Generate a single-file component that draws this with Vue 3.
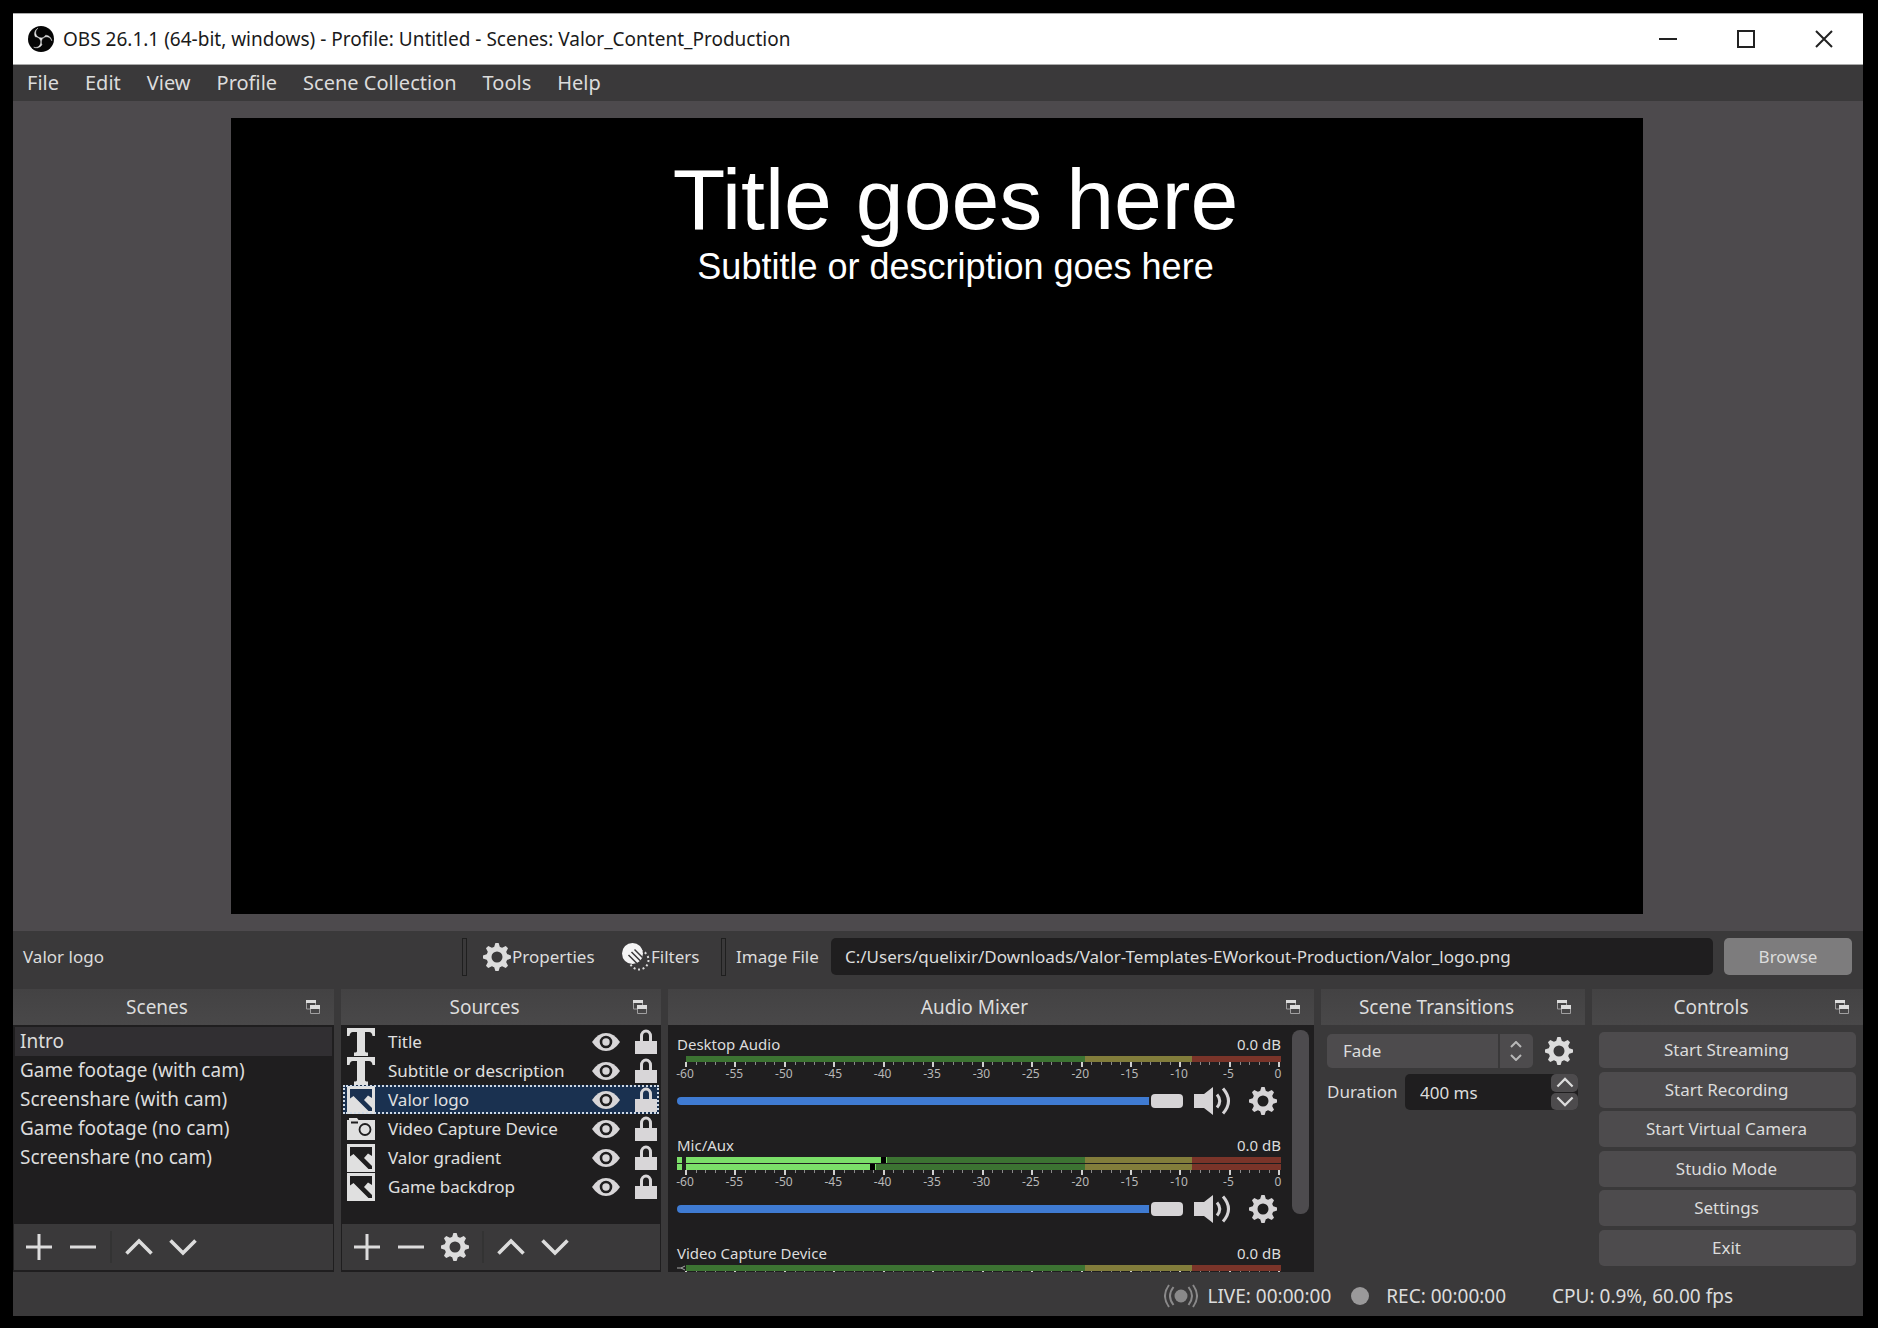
<script setup>
import { ref } from 'vue'

const menus = ['File', 'Edit', 'View', 'Profile', 'Scene Collection', 'Tools', 'Help']
const scenes = [
  'Intro',
  'Game footage (with cam)',
  'Screenshare (with cam)',
  'Game footage (no cam)',
  'Screenshare (no cam)',
]
const activeScene = ref('Intro')
const sources = [
  { name: 'Title', icon: 'text' },
  { name: 'Subtitle or description', icon: 'text' },
  { name: 'Valor logo', icon: 'image' },
  { name: 'Video Capture Device', icon: 'camera' },
  { name: 'Valor gradient', icon: 'image' },
  { name: 'Game backdrop', icon: 'image' },
]
const activeSource = ref('Valor logo')
const channels = [
  { name: 'Desktop Audio', db: '0.0 dB', bars: [0] },
  { name: 'Mic/Aux', db: '0.0 dB', bars: [32.7, 31] },
  { name: 'Video Capture Device', db: '0.0 dB', bars: [0], idle: true },
]
const labels = [-60, -55, -50, -45, -40, -35, -30, -25, -20, -15, -10, -5, 0]
const controls = ['Start Streaming', 'Start Recording', 'Start Virtual Camera', 'Studio Mode', 'Settings', 'Exit']
const filePath = ref('C:/Users/quelixir/Downloads/Valor-Templates-EWorkout-Production/Valor_logo.png')
const duration = ref('400 ms')
</script>

<template>
  <div class="desktop">
    <svg class="sprite" aria-hidden="true">
      <symbol id="gear" viewBox="0 0 28 28">
        <circle cx="14" cy="14" r="8" fill="none" stroke="currentColor" stroke-width="5" />
        <path
          v-for="n in 8"
          :key="n"
          d="M10.800 5L12.400 0h3.200L17.200 5z"
          fill="currentColor"
          :transform="`rotate(${n * 45} 14 14)`"
        />
      </symbol>
      <symbol id="plus" viewBox="0 0 28 28">
        <path d="M14 1v26M1 14h26" fill="none" stroke="currentColor" stroke-width="3" />
      </symbol>
      <symbol id="minus" viewBox="0 0 28 28">
        <path d="M1 14h26" fill="none" stroke="currentColor" stroke-width="3" />
      </symbol>
      <symbol id="up" viewBox="0 0 28 28">
        <path d="M1.500 20.500L14 8l12.500 12.500" fill="none" stroke="currentColor" stroke-width="3.600" />
      </symbol>
      <symbol id="down" viewBox="0 0 28 28">
        <path d="M1.500 7.500L14 20 26.500 7.500" fill="none" stroke="currentColor" stroke-width="3.600" />
      </symbol>
      <symbol id="text" viewBox="0 0 28 28">
        <path d="M0 0h28v8h-2.500q-.5-4-3.500-4h-4v19q0 1.500 3 1.500V28H7v-3.500q3 0 3-1.500V4H6Q3 4 2.500 8H0z" fill="currentColor" />
      </symbol>
      <symbol id="image" viewBox="0 0 28 28">
        <path
          d="M0 0h28v28H0zM3 3v9.500L6.500 10l15 15H25v-3l-8-8 4-4.500 4 2.500V3z"
          fill="currentColor"
          fill-rule="evenodd"
        />
      </symbol>
      <symbol id="camera" viewBox="0 0 28 28">
        <path d="M2 3h8l1.500 2H28v20H0V5h2z" fill="currentColor" />
        <path d="M4 7.500h7" stroke="#1f1e1f" stroke-width="2" />
        <circle cx="18" cy="14.500" r="5.500" fill="none" stroke="#1f1e1f" stroke-width="1.800" />
      </symbol>
      <symbol id="eye" viewBox="0 0 28 20">
        <path d="M0 10Q6 1 14 1t14 9q-6 9-14 9T0 10z" fill="currentColor" />
        <circle cx="14" cy="10" r="5" fill="none" stroke="#1f1e1f" stroke-width="2.600" />
      </symbol>
      <symbol id="lock" viewBox="0 0 22 26">
        <path d="M6.500 13V7a4.500 5 0 0 1 9 0V13" fill="none" stroke="currentColor" stroke-width="3" />
        <path d="M0 12h22v13H0z" fill="currentColor" />
      </symbol>
      <symbol id="speaker" viewBox="0 0 38 28">
        <path d="M0 7h10l9-7v28l-9-7H0z" fill="currentColor" />
        <path d="M23 7.500q5.500 6.500 0 13M29 1.500q11 12.500 0 25" fill="none" stroke="currentColor" stroke-width="3" />
      </symbol>
      <symbol id="float" viewBox="0 0 14 14">
        <path d="M0 0h10v3H0zM4 5h10v4H4z" fill="#dcdcdc" />
        <path d="M.5 3v6H4M9.500 3v2M4.500 9v4.500h9V9" fill="none" stroke="#a09fa0" />
      </symbol>
      <symbol id="filters" viewBox="0 0 28 28">
        <circle cx="17" cy="17" r="9.500" fill="none" stroke="currentColor" stroke-width="2" stroke-dasharray="2 2.600" />
        <circle cx="10.500" cy="10.500" r="10.500" fill="#f4f4f4" />
        <path d="M6.500 12l8.500 8.500M9.500 9l9 9M12.500 6.500l8 8" stroke="#3a393a" stroke-width="1.500" />
      </symbol>
      <symbol id="live" viewBox="0 0 34 24">
        <circle cx="17" cy="12" r="6.500" fill="currentColor" />
        <path
          d="M9.500 3q-7 9 0 18M5 1q-8 11 0 22M24.500 3q7 9 0 18M29 1q8 11 0 22"
          fill="none"
          stroke="currentColor"
          stroke-width="2"
        />
      </symbol>
    </svg>

    <main class="window">
      <header class="titlebar">
        <svg class="app-logo" viewBox="0 0 24 24">
          <circle cx="12" cy="12" r="12" fill="#050505" />
          <path
            fill="#e8e8e8"
            stroke="#e8e8e8"
            stroke-width=".4"
            d="M6.182 5.990c.352-1.698 1.503-3.229 3.050-3.996-.269.273-.595.483-.844.780-1.020 1.100-1.480 2.692-1.199 4.156.355 2.235 2.455 4.060 4.732 4.028 1.765.079 3.485-.937 4.348-2.468 1.848.063 3.645 1.017 4.700 2.548.540.799.962 1.736.991 2.711-.342-1.295-1.202-2.446-2.375-3.095-1.135-.639-2.529-.802-3.772-.425-1.560.448-2.849 1.723-3.293 3.293-.377 1.250-.216 2.628.377 3.772-.825 1.429-2.315 2.449-3.932 2.756-1.244.261-2.551.059-3.709-.464 1.036.302 2.161.355 3.191-.011 1.381-.457 2.522-1.567 3.024-2.935.556-1.490.345-3.261-.591-4.540-.700-1.007-1.803-1.717-3.002-1.969-.380-.068-.764-.098-1.148-.134-.611-1.231-.834-2.660-.528-3.996z"
          />
        </svg>
        <h1>OBS 26.1.1 (64-bit, windows) - Profile: Untitled - Scenes: Valor_Content_Production</h1>
        <button aria-label="Minimize">
          <svg viewBox="0 0 18 18"><path d="M0 9h18" /></svg>
        </button>
        <button aria-label="Maximize">
          <svg viewBox="0 0 18 18"><path d="M1 1h16v16H1z" /></svg>
        </button>
        <button aria-label="Close">
          <svg viewBox="0 0 18 18"><path d="M1 1l16 16M17 1L1 17" /></svg>
        </button>
      </header>

      <nav class="menubar">
        <button v-for="m in menus" :key="m">{{ m }}</button>
      </nav>

      <section class="preview">
        <div class="canvas">
          <p class="canvas-title">Title goes here</p>
          <p class="canvas-subtitle">Subtitle or description goes here</p>
        </div>
      </section>

      <section class="context">
        <span class="context-name">{{ activeSource }}</span>
        <i class="grip"></i>
        <button class="tool properties"><svg><use href="#gear" /></svg>Properties</button>
        <button class="tool filters"><svg><use href="#filters" /></svg>Filters</button>
        <i class="grip"></i>
        <label for="file">Image File</label>
        <input id="file" v-model="filePath" type="text" />
        <button class="browse">Browse</button>
      </section>

      <div class="docks">
        <section class="dock">
          <header><h2>Scenes</h2><button aria-label="Float"><svg><use href="#float" /></svg></button></header>
          <div class="panel">
            <ul>
              <li
                v-for="s in scenes"
                :key="s"
                class="scene"
                :class="{ active: s === activeScene }"
                @click="activeScene = s"
              >{{ s }}</li>
            </ul>
            <div class="toolbar">
              <button aria-label="Add scene"><svg><use href="#plus" /></svg></button>
              <button aria-label="Remove scene"><svg><use href="#minus" /></svg></button>
              <i></i>
              <button aria-label="Move scene up"><svg><use href="#up" /></svg></button>
              <button aria-label="Move scene down"><svg><use href="#down" /></svg></button>
            </div>
          </div>
        </section>

        <section class="dock">
          <header><h2>Sources</h2><button aria-label="Float"><svg><use href="#float" /></svg></button></header>
          <div class="panel">
            <ul>
              <li
                v-for="s in sources"
                :key="s.name"
                class="source"
                :class="{ active: s.name === activeSource }"
                @click="activeSource = s.name"
              >
                <svg class="kind"><use :href="'#' + s.icon" /></svg>
                <span>{{ s.name }}</span>
                <button aria-label="Visible"><svg class="eye"><use href="#eye" /></svg></button>
                <button aria-label="Locked"><svg class="lock"><use href="#lock" /></svg></button>
              </li>
            </ul>
            <div class="toolbar">
              <button aria-label="Add source"><svg><use href="#plus" /></svg></button>
              <button aria-label="Remove source"><svg><use href="#minus" /></svg></button>
              <button aria-label="Source properties"><svg><use href="#gear" /></svg></button>
              <i></i>
              <button aria-label="Move source up"><svg><use href="#up" /></svg></button>
              <button aria-label="Move source down"><svg><use href="#down" /></svg></button>
            </div>
          </div>
        </section>

        <section class="dock">
          <header><h2>Audio Mixer</h2><button aria-label="Float"><svg><use href="#float" /></svg></button></header>
          <div class="mixer">
            <div class="channels">
              <div v-for="(c, ci) in channels" :key="c.name" class="channel">
                <div class="channel-head">
                  <label :for="'vol' + ci">{{ c.name }}</label><span>{{ c.db }}</span>
                </div>
                <div class="meter">
                  <div v-for="(b, i) in c.bars" :key="i" class="bar">
                    <span class="clip" :class="{ lit: b }">
                      <svg v-if="c.idle" viewBox="0 0 8 6"><path d="M0 3h4M8 1L4 3l4 2" /></svg>
                    </span>
                    <span class="track">
                      <template v-if="b">
                        <span class="fill" :style="{ width: b + '%' }"></span>
                        <span class="hold"></span>
                      </template>
                    </span>
                  </div>
                </div>
                <div class="ticks"><i v-for="n in 61" :key="n" :class="{ major: n % 5 === 1 }"></i></div>
                <div v-if="!c.idle" class="scale"><span v-for="l in labels" :key="l">{{ l }}</span></div>
                <div class="volume">
                  <input :id="'vol' + ci" type="range" min="0" max="100" value="100" />
                  <button aria-label="Mute"><svg class="speaker"><use href="#speaker" /></svg></button>
                  <button aria-label="Channel settings"><svg class="cog"><use href="#gear" /></svg></button>
                </div>
              </div>
            </div>
            <div class="scrollbar"><span></span></div>
          </div>
        </section>

        <section class="dock">
          <header><h2>Scene Transitions</h2><button aria-label="Float"><svg><use href="#float" /></svg></button></header>
          <div class="transitions">
            <div class="row">
              <div class="combo">
                <select aria-label="Transition">
                  <option>Fade</option>
                  <option>Cut</option>
                </select>
                <svg viewBox="0 0 12 20"><path d="M1 6l5-5 5 5M1 14l5 5 5-5" /></svg>
              </div>
              <button aria-label="Transition settings"><svg class="cog"><use href="#gear" /></svg></button>
            </div>
            <div class="row">
              <label for="duration">Duration</label>
              <div class="spin">
                <input id="duration" v-model="duration" type="text" />
                <div class="steps">
                  <button aria-label="Increase"><svg><use href="#up" /></svg></button>
                  <button aria-label="Decrease"><svg><use href="#down" /></svg></button>
                </div>
              </div>
            </div>
          </div>
        </section>

        <section class="dock">
          <header><h2>Controls</h2><button aria-label="Float"><svg><use href="#float" /></svg></button></header>
          <div class="controls">
            <button v-for="c in controls" :key="c">{{ c }}</button>
          </div>
        </section>
      </div>

      <footer class="status">
        <svg class="live"><use href="#live" /></svg>
        <span>LIVE: 00:00:00</span>
        <i class="dot"></i>
        <span class="rec-text">REC: 00:00:00</span>
        <span>CPU: 0.9%, 60.00 fps</span>
      </footer>
    </main>
  </div>
</template>

<style>
body {
  background: #000;
}
</style>

<style scoped>
* {
  box-sizing: border-box;
  margin: 0;
  padding: 0;
}
.desktop {
  display: flex;
  min-height: 100vh;
  padding: 13px 15px 12px 13px;
  background: #000;
  color: #dcdcdc;
  font: 17px/24px 'Noto Sans', 'Open Sans', sans-serif;
}
.sprite {
  position: absolute;
  width: 0;
  height: 0;
}
button {
  border: 0;
  background: none;
  color: inherit;
  font: inherit;
}
input,
select {
  border: 0;
  color: inherit;
  font: inherit;
  outline: 0;
}
svg {
  display: block;
  flex: none;
}
ul {
  list-style: none;
}
.window {
  flex: 1;
  display: flex;
  flex-direction: column;
  min-width: 0;
  background: #3a393a;
}

.titlebar {
  display: flex;
  align-items: center;
  height: 52px;
  padding-left: 15px;
  border: solid #aaa;
  border-width: 1px 0;
  background: #fff;
  color: #1a1a1a;
}
.app-logo {
  width: 26px;
  height: 26px;
  margin-right: 9px;
}
h1 {
  flex: 1;
  font-size: 19px;
  font-weight: 400;
}
.titlebar button {
  display: flex;
  align-items: center;
  justify-content: center;
  width: 78px;
  height: 100%;
}
.titlebar button svg {
  width: 18px;
  height: 18px;
  fill: none;
  stroke: #222;
  stroke-width: 2;
}
.menubar {
  display: flex;
  align-items: center;
  gap: 26px;
  height: 36px;
  padding-left: 14px;
}
.menubar button {
  font-size: 20px;
}

.preview {
  flex: 1;
  display: flex;
  justify-content: center;
  padding: 17px 19px 17px 17px;
  background: #4d4a4d;
}
.canvas {
  aspect-ratio: 1412 / 796;
  padding: 33px 0 0 37px;
  background: #000;
  color: #fff;
  font-family: 'Liberation Sans', Arial, sans-serif;
  text-align: center;
}
.canvas-title {
  font-size: 86px;
  line-height: 96px;
}
.canvas-subtitle {
  font-size: 36px;
  line-height: 40px;
}

.context {
  display: flex;
  align-items: center;
  height: 58px;
  padding: 0 11px 7px 10px;
}
.context-name {
  width: 439px;
}
.grip {
  width: 5px;
  height: 38px;
  border: 1px solid #1f1f1f;
}
.tool {
  display: flex;
  align-items: center;
  gap: 1px;
}
.tool svg {
  width: 28px;
  height: 28px;
}
.properties {
  width: 139px;
  margin-left: 16px;
}
.filters {
  width: 99px;
}
.context label {
  width: 105px;
  padding-left: 10px;
}
.context input {
  flex: 1;
  min-width: 0;
  height: 37px;
  padding: 0 14px;
  border-radius: 5px;
  background: #1f1e1f;
}
.browse {
  width: 128px;
  height: 37px;
  margin-left: 11px;
  border-radius: 5px;
  background: #7d7c7d;
}

.docks {
  display: grid;
  grid-template-columns: 321fr 320fr 646fr 264fr 271fr;
  grid-template-rows: 283px;
  gap: 7px;
}
.dock {
  display: flex;
  flex-direction: column;
  min-width: 0;
}
.dock > header {
  display: flex;
  align-items: center;
  height: 36px;
  background: linear-gradient(#434243, #494849);
}
h2 {
  flex: 1;
  font-size: 19px;
  font-weight: 400;
  text-align: center;
}
.dock > header button {
  width: 33px;
  padding-left: 5px;
}
.dock > header svg {
  width: 14px;
  height: 14px;
}

.panel {
  flex: 1;
  display: flex;
  flex-direction: column;
  border: 1px solid #1f1e1f;
  border-bottom-width: 2px;
}
.panel ul {
  flex: 1;
  padding: 1px;
  background: #1f1e1f;
}
.scene {
  padding: 0 5px;
  font-size: 19px;
  line-height: 29px;
}
.scene.active {
  background: #312f32;
}
.source {
  display: flex;
  align-items: center;
  height: 29px;
  padding: 0 2px 0 4px;
  color: #e0e0e0;
}
.source.active {
  background: #1a3150;
  outline: 2px dotted #d0dae6;
  outline-offset: -2px;
}
.source span {
  flex: 1;
  padding-left: 13px;
}
.kind {
  width: 28px;
  height: 28px;
}
.eye {
  width: 28px;
  height: 20px;
  margin-right: 15px;
}
.lock {
  width: 22px;
  height: 26px;
}
.source button {
  color: #d8d6d8;
}
.toolbar {
  display: flex;
  align-items: center;
  gap: 16px;
  height: 46px;
  padding-left: 11px;
}
.toolbar svg {
  width: 28px;
  height: 28px;
}
.toolbar i {
  width: 2px;
  height: 32px;
  margin: 0 -3px;
  background: #333;
}

.mixer {
  flex: 1;
  display: flex;
  gap: 11px;
  min-height: 0;
  padding: 0 5px 0 9px;
  background: #1f1e1f;
  overflow: hidden;
}
.channels {
  flex: 1;
  padding-top: 7px;
}
.channel {
  margin-bottom: 18px;
}
.channel-head {
  display: flex;
  justify-content: space-between;
  font-size: 15px;
}
.meter {
  display: grid;
  gap: 1px;
}
.bar {
  display: flex;
  gap: 4px;
  height: 6px;
}
.clip {
  width: 5px;
}
.clip svg {
  width: 8px;
  height: 6px;
  fill: none;
  stroke: #a8a8a8;
}
.clip.lit,
.fill {
  background: #7bdf69;
}
.track {
  flex: 1;
  display: flex;
  background: linear-gradient(90deg, #3c7332 67%, #827d3b 67% 85%, #7a3429 85%);
}
.hold {
  width: 6px;
  border-right: 1px solid #7bdf69;
  background: #000;
}
.ticks {
  display: flex;
  justify-content: space-between;
  height: 5px;
  margin-left: 8px;
}
.ticks i {
  width: 1px;
  height: 3px;
  background: #8a898a;
}
.ticks .major {
  width: 2px;
  height: 5px;
  background: #d0d0d0;
}
.scale {
  display: flex;
  justify-content: space-between;
  height: 20px;
  margin: 0 -9px 0 -4px;
  color: #b8b8b8;
  font-size: 12px;
  line-height: 14px;
}
.scale span {
  width: 24px;
  text-align: center;
}
.volume {
  display: flex;
  align-items: center;
  height: 28px;
  padding-right: 4px;
}
.volume input {
  flex: 1;
  min-width: 0;
  height: 28px;
  margin-right: 11px;
  appearance: none;
  background: none;
}
.volume input::-webkit-slider-runnable-track {
  height: 8px;
  border-radius: 4px;
  background: #3f7bd2;
}
.volume input::-webkit-slider-thumb {
  width: 32px;
  height: 14px;
  margin-top: -3px;
  appearance: none;
  border-radius: 4px;
  background: #d6d4d6;
  box-shadow: 0 0 0 2px #1f1e1f;
}
.volume button {
  color: #d6d4d6;
}
.speaker {
  width: 38px;
  height: 28px;
  margin-right: 17px;
}
.cog {
  width: 28px;
  height: 28px;
}
.scrollbar {
  width: 17px;
  padding-top: 5px;
}
.scrollbar span {
  display: block;
  height: 184px;
  border-radius: 8px;
  background: #4d4b4e;
}

.transitions {
  display: flex;
  flex-direction: column;
  gap: 6px;
  padding: 9px 7px 0 6px;
}
.row {
  display: flex;
  align-items: center;
}
.combo {
  position: relative;
  flex: 1;
  margin-right: 12px;
}
.transitions .row > button {
  margin-right: 5px;
}
.combo select {
  width: 100%;
  height: 34px;
  padding-left: 16px;
  appearance: none;
  border-radius: 5px;
  background: linear-gradient(90deg, transparent calc(100% - 35px), #3a393a 0 calc(100% - 33px), transparent 0) #4d4b4d;
}
.combo svg {
  position: absolute;
  top: 7px;
  right: 11px;
  width: 12px;
  height: 20px;
  fill: none;
  stroke: #b8b8b8;
  stroke-width: 2;
  pointer-events: none;
}
.row label {
  width: 78px;
}
.spin {
  flex: 1;
  display: flex;
  min-width: 0;
  border-radius: 5px;
  background: #1f1e1f;
}
.spin input {
  flex: 1;
  min-width: 0;
  height: 36px;
  padding-left: 15px;
  background: none;
}
.steps {
  display: grid;
  grid-template-rows: 1fr 1fr;
  gap: 1px;
  width: 27px;
}
.steps button {
  display: flex;
  align-items: center;
  justify-content: center;
  border-radius: 5px;
  background: #4d4b4d;
}
.steps svg {
  width: 18px;
  height: 17px;
}
.controls {
  flex: 1;
  display: flex;
  flex-direction: column;
  justify-content: space-between;
  padding: 7px 7px 6px;
}
.controls button {
  height: 36px;
  padding-right: 2px;
  border-radius: 5px;
  background: #4d4b4d;
}

.status {
  display: flex;
  align-items: center;
  justify-content: flex-end;
  height: 44px;
  padding: 4px 130px 0 0;
  font-size: 19px;
}
.live {
  width: 34px;
  height: 24px;
  margin-right: 9px;
  color: #8a898a;
}
.dot {
  width: 18px;
  height: 18px;
  margin: 0 17px 0 20px;
  border-radius: 50%;
  background: #9a999a;
}
.rec-text {
  margin-right: 46px;
}
</style>
